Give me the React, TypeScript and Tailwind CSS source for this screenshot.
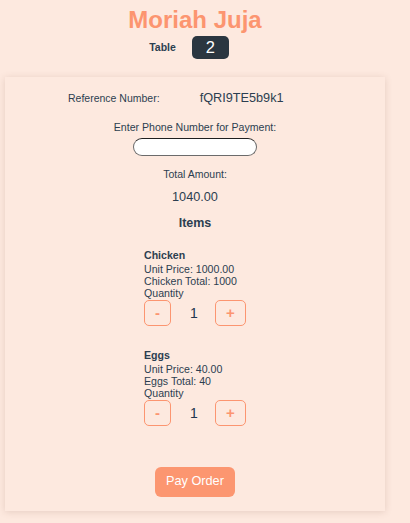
import { useState } from "react";

type OrderItem = {
  name: string;
  unitPrice: number;
  quantity: number;
};

const initialItems: OrderItem[] = [
  { name: "Chicken", unitPrice: 1000, quantity: 1 },
  { name: "Eggs", unitPrice: 40, quantity: 1 },
];

export default function App() {
  const [items, setItems] = useState<OrderItem[]>(initialItems);
  const [phone, setPhone] = useState<string>("");

  const total = items.reduce((sum, item) => sum + item.unitPrice * item.quantity, 0);

  const changeQuantity = (index: number, delta: number): void => {
    setItems((prev) =>
      prev.map((item, i) =>
        i === index ? { ...item, quantity: Math.max(0, item.quantity + delta) } : item,
      ),
    );
  };

  return (
    <div className="min-h-screen bg-[#fde9df] font-['Liberation_Sans',Arial,sans-serif] text-[#2c3e50]">
      <div className="w-[390px] px-[5px] pt-[6px]">
        <h1 className="text-center text-[24px] font-bold leading-[28px] text-[#fc9570]">
          Moriah Juja
        </h1>
        <div className="mt-[2px] flex items-center justify-center gap-[16px] pr-[12px]">
          <span className="text-[10.5px] font-bold">Table</span>
          <span className="flex h-[23px] w-[37px] items-center justify-center rounded-[5px] bg-[#2b3640] text-[16.5px] text-white">
            2
          </span>
        </div>

        <section className="mt-[18px] flex flex-col items-center bg-[#fde9df] pt-[14px] pb-[14px] shadow-[0_1px_7px_rgba(120,80,60,0.18)]">
          <div className="flex h-[16px] items-center gap-[40px] self-start pl-[63px]">
            <span className="text-[10.5px]">Reference Number:</span>
            <span className="text-[12.7px]">fQRI9TE5b9k1</span>
          </div>

          <p className="mt-[14px] text-[10.6px] leading-[12px]">Enter Phone Number for Payment:</p>
          <input
            type="text"
            value={phone}
            onChange={(e) => setPhone(e.target.value)}
            className="mt-[5px] h-[18px] w-[124px] rounded-full border border-[#6b6b6b] border-t-[#1f1f1f] bg-white px-2 text-[10.5px] outline-none"
          />

          <p className="mt-[12px] text-[10.5px] leading-[12px]">Total Amount:</p>
          <p className="mt-[9px] text-[12.7px] leading-[16px]">{total.toFixed(2)}</p>

          <h2 className="mt-[10px] text-[12.5px] font-bold leading-[16px]">Items</h2>

          <div className="mt-[18px] flex flex-col gap-[23px]">
            {items.map((item, index) => (
              <div key={item.name} className="text-[10.6px] leading-[12px]">
                <p className="mb-[2px] font-bold">{item.name}</p>
                <p>Unit Price: {item.unitPrice.toFixed(2)}</p>
                <p>
                  {item.name} Total: {item.unitPrice * item.quantity}
                </p>
                <p>Quantity</p>
                <div className="mt-[1px] flex items-center">
                  <button
                    type="button"
                    onClick={() => changeQuantity(index, -1)}
                    className="flex h-[26px] w-[27px] items-center justify-center rounded-[5px] border border-[#fc9570] text-[15px] font-bold text-[#fc9570]"
                  >
                    -
                  </button>
                  <span className="w-[44px] pl-[2px] text-center text-[14px] text-[#22364f]">
                    {item.quantity}
                  </span>
                  <button
                    type="button"
                    onClick={() => changeQuantity(index, 1)}
                    className="flex h-[26px] w-[31px] items-center justify-center rounded-[5px] border border-[#fc9570] text-[15px] font-bold text-[#fc9570]"
                  >
                    +
                  </button>
                </div>
              </div>
            ))}
          </div>

          <button
            type="button"
            className="mt-[41px] h-[30px] w-[80px] rounded-[6px] bg-[#fc9670] text-[12.7px] text-white"
          >
            Pay Order
          </button>
        </section>
      </div>
    </div>
  );
}
